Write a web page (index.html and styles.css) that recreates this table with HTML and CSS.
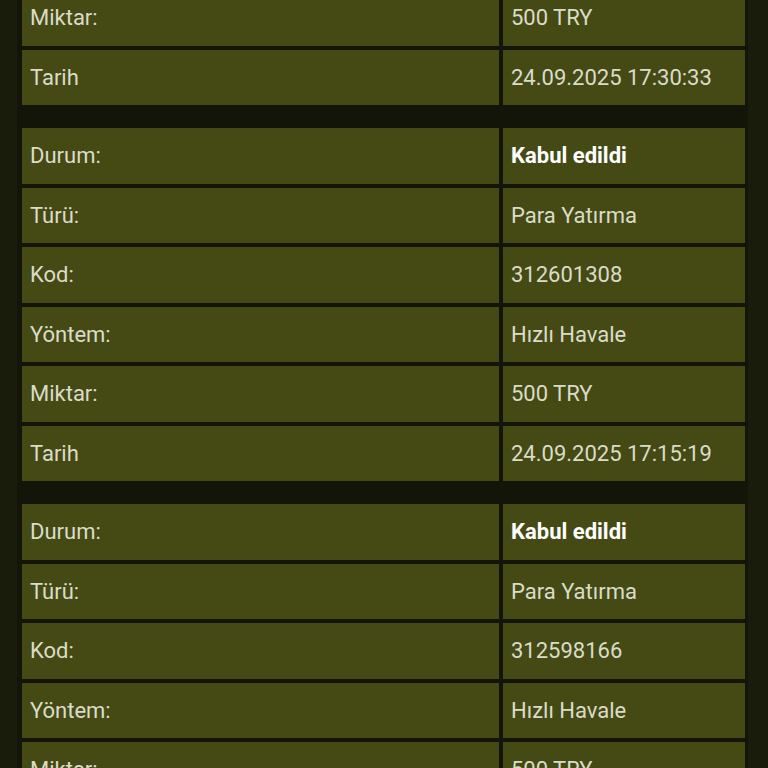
FILE: index.html
```html
<!DOCTYPE html>
<html lang="tr">
<head>
<meta charset="utf-8">
<link rel="stylesheet" href="styles.css">
</head>
<body>
<div class="page">
  <div class="list">
    <div class="group">
      <div class="cell">Miktar:</div><div class="cell">500 TRY</div>
      <div class="cell">Tarih</div><div class="cell">24.09.2025 17:30:33</div>
    </div>
    <div class="group">
      <div class="cell">Durum:</div><div class="cell strong">Kabul edildi</div>
      <div class="cell">Türü:</div><div class="cell">Para Yatırma</div>
      <div class="cell">Kod:</div><div class="cell">312601308</div>
      <div class="cell">Yöntem:</div><div class="cell">Hızlı Havale</div>
      <div class="cell">Miktar:</div><div class="cell">500 TRY</div>
      <div class="cell">Tarih</div><div class="cell">24.09.2025 17:15:19</div>
    </div>
    <div class="group">
      <div class="cell">Durum:</div><div class="cell strong">Kabul edildi</div>
      <div class="cell">Türü:</div><div class="cell">Para Yatırma</div>
      <div class="cell">Kod:</div><div class="cell">312598166</div>
      <div class="cell">Yöntem:</div><div class="cell">Hızlı Havale</div>
      <div class="cell">Miktar:</div><div class="cell">500 TRY</div>
    </div>
  </div>
</div>
</body>
</html>
```
FILE: styles.css
```css
html, body {
  margin: 0;
  padding: 0;
  height: 768px;
  overflow: hidden;
  background: #1a1c0b;
}
.page {
  margin: -10px 20px 0 17px;
  background: #131508;
  padding: 0 3px 0 5px;
}
.list {
  display: flex;
  flex-direction: column;
  gap: 23px;
}
.group {
  display: grid;
  grid-template-columns: 477px 242px;
  grid-auto-rows: 55.5px;
  column-gap: 4px;
  row-gap: 4px;
}
.cell {
  background: #454a15;
  color: #dadcc8;
  font-family: Roboto, "Liberation Sans", sans-serif;
  font-size: 22px;
  display: flex;
  align-items: center;
  padding: 0 8px;
}
.strong {
  color: #ffffff;
  font-weight: 700;
}
```
